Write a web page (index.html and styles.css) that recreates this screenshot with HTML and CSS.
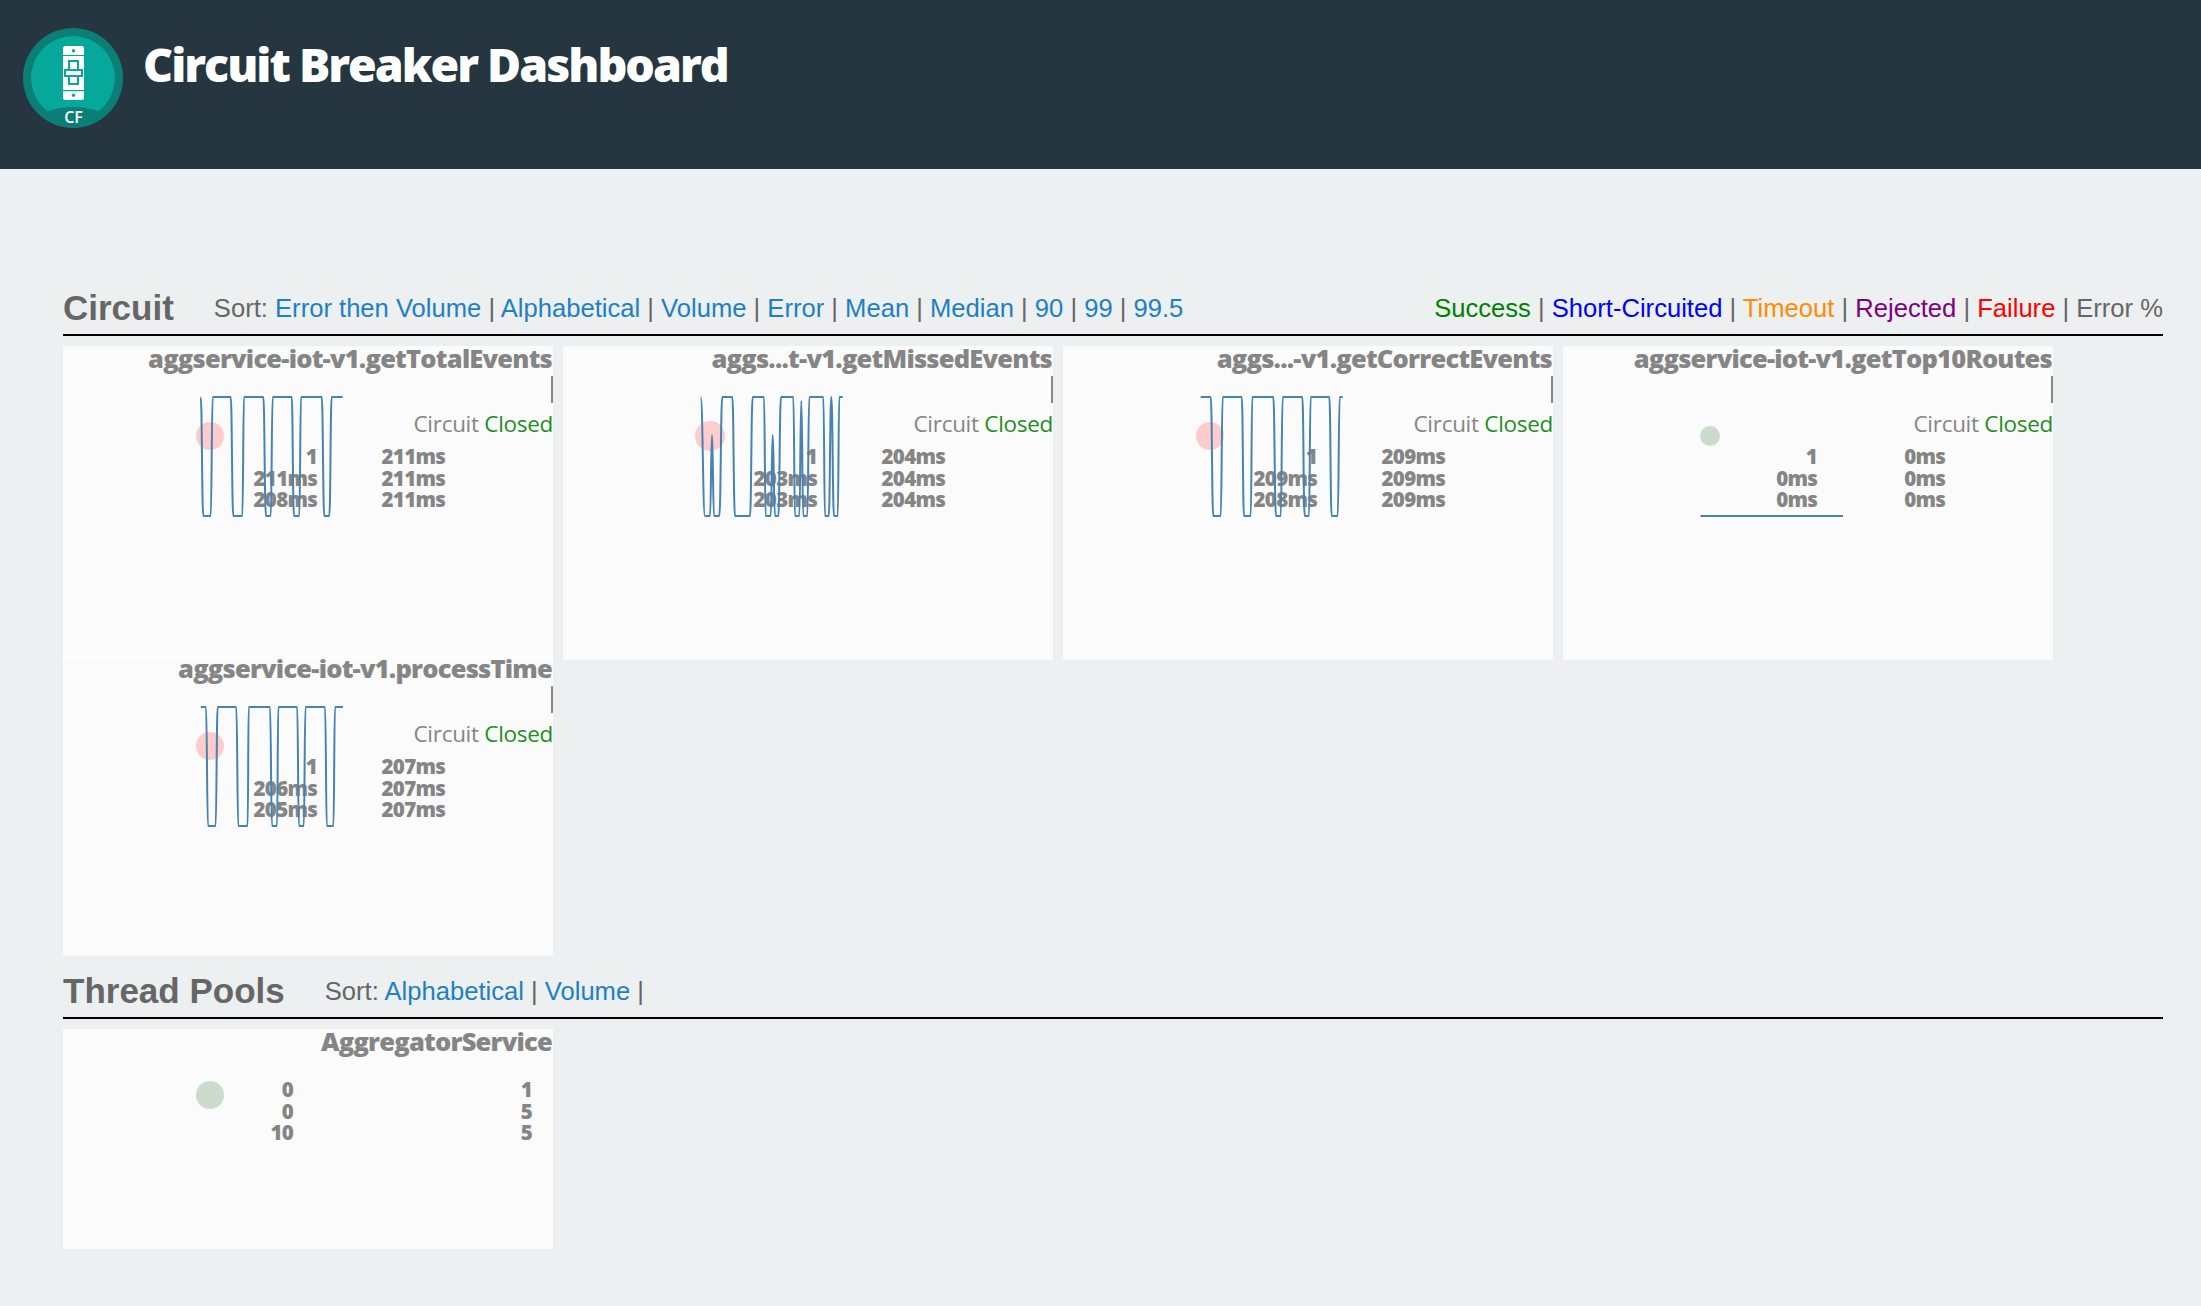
FILE: index.html
```html
<!DOCTYPE html>
<html lang="en">
<head>
<meta charset="utf-8">
<title>Circuit Breaker Dashboard</title>
<link rel="stylesheet" href="styles.css">
</head>
<body>
<header class="app-header">
  <svg class="logo" viewBox="0 0 100 100" aria-hidden="true">
    <circle cx="50" cy="50" r="50" fill="#0b7f76"/>
    <circle cx="50" cy="50" r="42" fill="#05a89a"/>
    <path d="M24 83.5Q50 74.6 76 83.5A42 42 0 0 1 24 83.5Z" fill="#0b7f76"/>
    <rect x="40" y="18" width="21" height="54" rx="2.5" fill="#fff"/>
    <circle cx="50.5" cy="22.7" r="1.7" fill="#05a89a"/>
    <circle cx="50.5" cy="67.3" r="1.7" fill="#05a89a"/>
    <path d="M40 27.5H61M40 62.7H61" stroke="#05a89a" stroke-width="1.2"/>
    <rect x="46" y="33" width="9" height="23" fill="#fff" stroke="#05a89a" stroke-width="2"/>
    <rect x="42" y="42" width="17" height="6" fill="#fff" stroke="#05a89a" stroke-width="2"/>
    <text class="logo-text" x="50.5" y="95.2" text-anchor="middle">CF</text>
  </svg>
  <h1 class="app-title">Circuit Breaker Dashboard</h1>
</header>

<main class="content">
  <section class="section section-circuit">
    <div class="section-head">
      <h2 class="section-title">Circuit</h2>
      <div class="menu sort-circuit">Sort: <a>Error then Volume</a> | <a>Alphabetical</a> | <a>Volume</a> | <a>Error</a> | <a>Mean</a> | <a>Median</a> | <a>90</a> | <a>99</a> | <a>99.5</a></div>
      <div class="menu legend"><span class="success">Success</span> | <span class="short">Short-Circuited</span> | <span class="timeout">Timeout</span> | <span class="rejected">Rejected</span> | <span class="failure">Failure</span> | Error %</div>
    </div>
    <div class="grid">
      <article class="panel panel-tall">
        <h3 class="panel-title">aggservice-iot-v1.getTotalEvents</h3>
        <span class="rate-bar"></span>
        <p class="status">Circuit <span class="closed">Closed</span></p>
        <div class="stats">
          <span>1</span><span>211ms</span><span>211ms</span><span>211ms</span><span>208ms</span><span>211ms</span>
        </div>
        <span class="dot dot-red"></span>
        <svg class="spark" viewBox="0 0 144 122" aria-hidden="true"><path d="M.7 1C2 1 2 120 3.3 120H10.7C11.7 120 11.7 1 12.7 1H30.7C32 1 32 120 33.3 120H42.3C43.2 120 43.2 1 44 1H63.3C64.6 1 64.6 120 66 120H70.7C71.7 120 71.7 1 72.7 1H91.7C92.8 1 92.8 120 94 120H99.3C100.2 120 100.2 1 101 1H121.7C123 1 123 120 124.3 120H129.3C130.5 120 130.5 1 131.7 1H142.7"/></svg>
      </article>
      <article class="panel panel-tall">
        <h3 class="panel-title">aggs...t-v1.getMissedEvents</h3>
        <span class="rate-bar"></span>
        <p class="status">Circuit <span class="closed">Closed</span></p>
        <div class="stats">
          <span>1</span><span>204ms</span><span>203ms</span><span>204ms</span><span>203ms</span><span>204ms</span>
        </div>
        <span class="dot dot-red dot-large"></span>
        <svg class="spark" viewBox="0 0 144 122" aria-hidden="true"><path d="M.7 1C2.8 1 2.8 120 5 120H10C11 120 11 39 12 39C13 39 13 120 14 120H19.3C20.8 120 20.8 1 22.3 1H32.3C33.6 1 33.6 120 35 120H50C51.3 120 51.3 1 52.7 1H64C64.8 1 64.8 120 65.7 120H70.7C71.7 120 71.7 39 72.7 39C73.8 39 73.8 120 75 120H78.3C79.6 120 79.6 1 81 1H93.3C94.2 1 94.2 120 95 120H99.3C100.3 120 100.3 4.7 101.3 4.7C102.3 4.7 102.3 120 103.3 120H107.3C108.3 120 108.3 1 109.3 1H123.3C124.2 1 124.2 120 125 120H128.7C130 120 130 1 131.3 1C132.7 1 132.7 120 134 120H137.7C138.5 120 138.5 1 139.3 1H142.7"/></svg>
      </article>
      <article class="panel panel-tall">
        <h3 class="panel-title">aggs...-v1.getCorrectEvents</h3>
        <span class="rate-bar"></span>
        <p class="status">Circuit <span class="closed">Closed</span></p>
        <div class="stats">
          <span>1</span><span>209ms</span><span>209ms</span><span>209ms</span><span>208ms</span><span>209ms</span>
        </div>
        <span class="dot dot-red"></span>
        <svg class="spark" viewBox="0 0 144 122" aria-hidden="true"><path d="M.7 1H10.7C12 1 12 120 13.3 120H20.7C21.7 120 21.7 1 22.7 1H41.7C42.9 1 42.9 120 44 120H50.7C51.5 120 51.5 1 52.3 1H73.3C74.6 1 74.6 120 76 120H80.7C81.7 120 81.7 1 82.7 1H102.3C103.5 1 103.5 120 104.7 120H109C109.8 120 109.8 1 110.7 1H129.3C130.5 1 130.5 120 131.7 120H137.7C138.7 120 138.7 1 139.7 1H142.7"/></svg>
      </article>
      <article class="panel panel-tall">
        <h3 class="panel-title">aggservice-iot-v1.getTop10Routes</h3>
        <span class="rate-bar"></span>
        <p class="status">Circuit <span class="closed">Closed</span></p>
        <div class="stats">
          <span>1</span><span>0ms</span><span>0ms</span><span>0ms</span><span>0ms</span><span>0ms</span>
        </div>
        <span class="dot dot-green dot-small"></span>
        <svg class="spark" viewBox="0 0 144 122" aria-hidden="true"><path d="M.5 120H143"/></svg>
      </article>
      <article class="panel panel-short">
        <h3 class="panel-title">aggservice-iot-v1.processTime</h3>
        <span class="rate-bar"></span>
        <p class="status">Circuit <span class="closed">Closed</span></p>
        <div class="stats">
          <span>1</span><span>207ms</span><span>206ms</span><span>207ms</span><span>205ms</span><span>207ms</span>
        </div>
        <span class="dot dot-red"></span>
        <svg class="spark" viewBox="0 0 144 122" aria-hidden="true"><path d="M.8 1H6C7 1 7 120 8 120H15.6C16.6 120 16.6 1 17.7 1H36.3C37.3 1 37.3 120 38.3 120H47.6C48.2 120 48.2 1 48.7 1H70C71 1 71 120 72 120H77C77.7 120 77.7 1 78.3 1H97.2C98 1 98 120 99 120H103.8C104.6 120 104.6 1 105.5 1H125C126 1 126 120 126.8 120H133.4C134.2 120 134.2 1 135 1H143"/></svg>
      </article>
    </div>
  </section>

  <section class="section section-pools">
    <div class="section-head">
      <h2 class="section-title">Thread Pools</h2>
      <div class="menu sort-pools">Sort: <a>Alphabetical</a> | <a>Volume</a> |</div>
    </div>
    <div class="grid">
      <article class="panel panel-pool">
        <h3 class="panel-title">AggregatorService</h3>
        <span class="dot dot-green dot-pool"></span>
        <div class="stats stats-pool">
          <span>0</span><span>1</span><span>0</span><span>5</span><span>10</span><span>5</span>
        </div>
      </article>
    </div>
  </section>
</main>
</body>
</html>
```
FILE: styles.css
```css
* { box-sizing: border-box; }
html, body { margin: 0; padding: 0; }
body {
  min-height: 1306px;
  background: #ecf0f1;
  font-family: "Liberation Sans", Arial, sans-serif;
  color: #666;
  overflow: hidden;
}
.app-header {
  display: flex;
  align-items: flex-start;
  height: 169px;
  padding: 28px 0 0 23px;
  background: #253640;
}
.logo { width: 100px; height: 100px; flex: none; }
.logo-text {
  font-family: "Open Sans", sans-serif;
  font-size: 16px;
  font-weight: 600;
  fill: #fff;
}
.app-title {
  margin: 6px 0 0 20px;
  font-family: "Open Sans", sans-serif;
  font-size: 46.5px;
  line-height: 60px;
  font-weight: 800;
  letter-spacing: -2px;
  color: #fff;
}
.content { padding: 0 38px 0 63px; }
.section-circuit { padding-top: 117px; }
.section-pools { padding-top: 13px; }
.section-head {
  display: flex;
  align-items: flex-start;
  height: 50px;
  padding-top: 2px;
  border-bottom: 2px solid #000;
}
.section-title {
  margin: 0;
  font-size: 35px;
  font-weight: 700;
  line-height: 40px;
  color: #666;
  white-space: nowrap;
}
.menu { font-size: 25.6px; line-height: 40px; color: #666; white-space: nowrap; }
.menu a { color: #1f7fc4; }
.sort-circuit { margin-left: 40px; }
.sort-pools { margin-left: 40px; }
.legend { margin-left: auto; }
.success { color: #008000; }
.short { color: #0000ff; }
.timeout { color: #ff8c00; }
.rejected { color: #800080; }
.failure { color: #ff0000; }
.grid {
  display: flex;
  flex-wrap: wrap;
  gap: 0 10px;
  padding-top: 10px;
}
.panel {
  position: relative;
  width: 490px;
  background: rgba(255, 254, 254, 0.8);
  font-family: "Open Sans", sans-serif;
  color: #858585;
}
.panel-tall { height: 314px; margin-bottom: -4px; }
.panel-short { height: 300px; }
.panel-pool { height: 220px; }
.panel-title {
  margin: 0;
  padding-right: 1px;
  font-size: 25.5px;
  line-height: 24px;
  font-weight: 800;
  letter-spacing: -0.78px;
  text-align: right;
  white-space: nowrap;
  color: #858585;
}
.rate-bar {
  position: absolute;
  top: 30px;
  right: 0;
  width: 2px;
  height: 27px;
  background: #888;
}
.status {
  margin: 40px 0 0;
  font-size: 22.5px;
  line-height: 28px;
  letter-spacing: -0.3px;
  text-align: right;
  color: #858585;
}
.closed { color: #1f8f1f; }
.stats {
  display: grid;
  grid-template-columns: 254px 128px;
  width: 382px;
  margin-top: 8px;
  font-size: 20.5px;
  line-height: 21.5px;
  font-weight: 800;
  letter-spacing: -0.75px;
  text-align: right;
  color: #858585;
}
.stats-pool { grid-template-columns: 230px 239px; width: 469px; margin-top: 26px; }
.dot {
  position: absolute;
  left: 133px;
  top: 76px;
  width: 28px;
  height: 28px;
  border-radius: 50%;
}
.dot-red { background: #ffcccc; }
.dot-green { background: #ccdccc; }
.dot-large { left: 132px; top: 75px; width: 30px; height: 30px; }
.dot-small { left: 137px; top: 80px; width: 20px; height: 20px; }
.dot-pool { top: 52px; }
.spark {
  position: absolute;
  left: 137px;
  top: 50px;
  width: 144px;
  height: 122px;
  fill: none;
  stroke: #4682b4;
  stroke-width: 2;
  stroke-linejoin: round;
}
```
